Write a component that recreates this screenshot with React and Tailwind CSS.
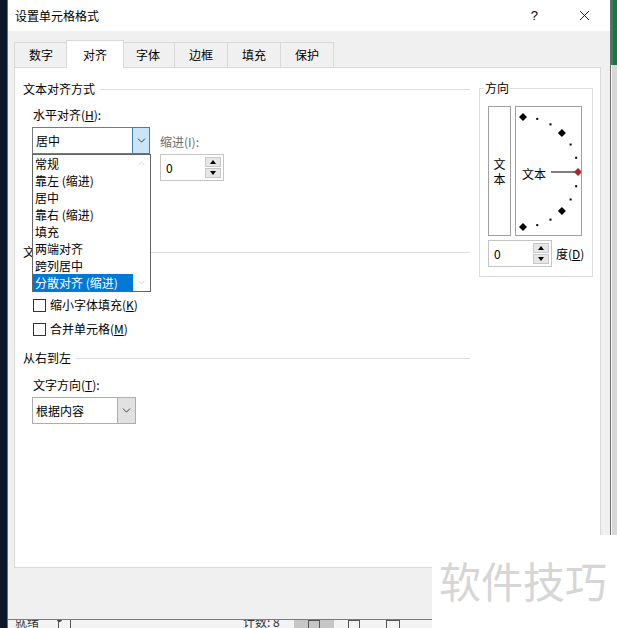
import { ChevronDown, ChevronUp, X } from "lucide-react";

const tabs = ["数字", "对齐", "字体", "边框", "填充", "保护"];
const listItems = ["常规", "靠左 (缩进)", "居中", "靠右 (缩进)", "填充", "两端对齐", "跨列居中", "分散对齐 (缩进)"];

function Heading({ children }) {
    return (
        <div className="h-[16px] flex items-center">
            <span className="leading-[16px]">{children}</span>
            <div className="flex-1 ml-[5px] border-t border-[#dcdcdc]" />
        </div>
    );
}

function Spin({ width }) {
    return (
        <div className={`h-[27px] ${width} border border-[#c4c4c4] bg-white flex items-center pl-[5px] pr-[2px]`}>
            <span className="flex-1 leading-[16px]">0</span>
            <div className="w-[16px] h-[21px] flex flex-col gap-px">
                <div className="flex-1 bg-[#e6e6e6] border border-[#c8c8c8] flex items-center justify-center">
                    <div className="w-0 h-0 border-x-[3px] border-x-transparent border-b-[4px] border-b-black" />
                </div>
                <div className="flex-1 bg-[#e6e6e6] border border-[#c8c8c8] flex items-center justify-center">
                    <div className="w-0 h-0 border-x-[3px] border-x-transparent border-t-[4px] border-t-black" />
                </div>
            </div>
        </div>
    );
}

function Checkbox({ label }) {
    return (
        <div className="h-[24px] flex items-center pl-[10px]">
            <div className="w-[13px] h-[13px] border border-[#333] bg-white" />
            <span className="ml-[4px] leading-[16px]">{label}</span>
        </div>
    );
}

function Dial() {
    const cx = 7, cy = 65, r = 55;
    const points = [];
    for (let a = 90; a >= -90; a -= 15) {
        const rad = (a * Math.PI) / 180;
        points.push({ a, x: cx + r * Math.cos(rad), y: cy - r * Math.sin(rad) });
    }
    return (
        <div className="relative w-[67px] h-[130px] border border-[#a0a0a0] bg-white ml-[4px]">
            <svg width="65" height="128" className="absolute left-0 top-0">
                <line x1="35" y1="65" x2="60" y2="65" stroke="#000" strokeWidth="1" />
                {points.map((p) => {
                    if (p.a === 0) {
                        return <polygon key={p.a} points={`${p.x},${p.y - 4} ${p.x + 4},${p.y} ${p.x},${p.y + 4} ${p.x - 4},${p.y}`} fill="#b22222" />;
                    }
                    if (Math.abs(p.a) % 45 === 0) {
                        return <polygon key={p.a} points={`${p.x},${p.y - 4} ${p.x + 4},${p.y} ${p.x},${p.y + 4} ${p.x - 4},${p.y}`} fill="#000" />;
                    }
                    return <rect key={p.a} x={p.x - 1} y={p.y - 1} width="2" height="2" fill="#000" />;
                })}
            </svg>
            <span className="absolute left-[6px] top-[59px] leading-[16px]">文本</span>
        </div>
    );
}

export default function App() {
    return (
        <div className="w-[617px] h-[628px] flex bg-[#0b1828] overflow-hidden relative text-[12px] text-black font-['Noto_Sans_CJK_SC','Noto_Sans',sans-serif]">
            <div className="w-[7px] bg-[#0b1828]" />

            {/* dialog */}
            <div className="w-[604px] flex flex-col border-x border-[#6c6c6c] bg-[#f0f0f0]">
                {/* title bar */}
                <div className="h-[31px] bg-white flex items-center pl-[7px] shrink-0">
                    <span className="leading-[16px]">设置单元格格式</span>
                    <span className="ml-auto mr-[38px] text-[13px] leading-[16px] font-['Liberation_Sans',sans-serif]">?</span>
                    <X size={17} strokeWidth={1.2} className="mr-[17px]" />
                </div>

                <div className="pl-[6px] pt-[9px] shrink-0">
                    {/* tabs */}
                    <div className="h-[27px] flex items-end">
                        {tabs.map((t, i) =>
                            i === 1 ? (
                                <div key={t} className="w-[58px] h-[28px] -mx-[2px] -mb-px bg-white border border-b-0 border-[#d9d9d9] relative z-10 flex items-center justify-center">
                                    <span className="leading-[16px] mt-[1px]">{t}</span>
                                </div>
                            ) : (
                                <div key={t} className={`w-[54px] h-[25px] border border-b-0 border-[#d9d9d9] flex items-center justify-center ${i > 0 ? "-ml-px" : ""}`}>
                                    <span className="leading-[16px]">{t}</span>
                                </div>
                            )
                        )}
                    </div>

                    {/* panel */}
                    <div className="w-[587px] h-[501px] bg-white border border-[#d9d9d9] relative flex">
                        <div className="w-[455px] pl-[8px] pt-[13px] flex flex-col">
                            <Heading>文本对齐方式</Heading>
                            <div className="pl-[10px] mt-[10px] leading-[16px]">
                                水平对齐(<span className="underline">H</span>):
                            </div>
                            <div className="pl-[9px] mt-[4px] flex items-start">
                                <div className="w-[118px] h-[27px] border border-[#7a7a7a] flex">
                                    <span className="flex-1 pl-[3px] leading-[25px]">居中</span>
                                    <div className="w-[18px] -my-px -mr-px bg-[#cce4f7] border border-[#3c7fb1] flex items-center justify-center">
                                        <ChevronDown size={13} strokeWidth={1.3} />
                                    </div>
                                </div>
                                <div className="ml-[10px] pt-[7px] flex flex-col">
                                    <span className="leading-[16px] text-[#6d6d6d]">缩进(I):</span>
                                    <div className="mt-[4px]">
                                        <Spin width="w-[64px]" />
                                    </div>
                                </div>
                            </div>
                            <div className="h-[63px]" />
                            <Heading>文本控制</Heading>
                            <div className="h-[33px]" />
                            <Checkbox label={<>缩小字体填充(<span className="underline">K</span>)</>} />
                            <Checkbox label={<>合并单元格(<span className="underline">M</span>)</>} />
                            <div className="h-[9px]" />
                            <Heading>从右到左</Heading>
                            <div className="pl-[10px] mt-[11px] leading-[16px]">
                                文字方向(<span className="underline">T</span>):
                            </div>
                            <div className="pl-[9px] mt-[4px]">
                                <div className="w-[104px] h-[27px] border border-[#adadad] flex">
                                    <span className="flex-1 pl-[3px] leading-[25px]">根据内容</span>
                                    <div className="w-[18px] bg-[#e1e1e1] border-l border-[#adadad] flex items-center justify-center">
                                        <ChevronDown size={13} strokeWidth={1.3} />
                                    </div>
                                </div>
                            </div>
                        </div>

                        {/* orientation */}
                        <div className="ml-[9px] mt-[20px]">
                            <div className="w-[114px] h-[189px] border border-[#dcdcdc] relative pl-[8px] pt-[17px]">
                                <span className="absolute left-[4px] -top-[9px] bg-white px-[1px] leading-[16px]">方向</span>
                                <div className="flex">
                                    <div className="w-[23px] h-[130px] border border-[#a0a0a0] flex flex-col items-center justify-center leading-[15px]">
                                        <span>文</span>
                                        <span>本</span>
                                    </div>
                                    <Dial />
                                </div>
                                <div className="mt-[4px] flex items-center">
                                    <Spin width="w-[64px]" />
                                    <span className="ml-[4px] leading-[16px]">度(<span className="underline">D</span>)</span>
                                </div>
                            </div>
                        </div>

                        {/* open dropdown list */}
                        <div className="absolute left-[17px] top-[86px] w-[119px] h-[138px] border border-[#646464] bg-white flex z-20">
                            <div className="w-[100px] flex flex-col">
                                {listItems.map((item, i) => (
                                    <div key={item} className={`h-[17px] pl-[2px] leading-[17px] whitespace-nowrap ${i === 7 ? "bg-[#0078d7] text-white" : ""}`}>
                                        {item}
                                    </div>
                                ))}
                            </div>
                            <div className="flex-1 flex flex-col items-center justify-between py-[3px] text-[#c2c2c2]">
                                <ChevronUp size={11} strokeWidth={1.5} />
                                <ChevronDown size={11} strokeWidth={1.5} />
                            </div>
                        </div>
                    </div>
                </div>

                <div className="flex-1" />

                {/* excel status bar behind the dialog */}
                <div className="h-[9px] shrink-0 border-t border-[#7b7b7b] bg-[#f3f3f3] flex items-start overflow-hidden">
                    <span className="ml-[7px] mt-[-6px] leading-[16px] text-[#333]">就绪</span>
                    <div className="ml-[19px] mt-[-1px] w-[13px] h-[10px] border border-[#555] relative">
                        <div className="absolute -left-[2px] -top-[3px] w-[5px] h-[5px] rounded-full bg-[#444]" />
                    </div>
                    <span className="ml-[172px] mt-[-6px] leading-[16px] text-[#333]">计数: 8</span>
                    <div className="ml-[14px] w-[40px] h-[9px] bg-[#c6c6c6] flex justify-center">
                        <div className="w-[12px] h-[8px] border border-[#555] border-b-0" />
                    </div>
                    <div className="ml-[14px] w-[12px] h-[9px] border border-[#555] border-b-0" />
                    <div className="ml-[26px] w-[14px] h-[9px] border border-[#555] border-b-0" />
                </div>
            </div>

            {/* excel window edge */}
            <div className="w-[6px] flex flex-col">
                <div className="h-[65px] bg-[#217346] border-l-2 border-[#2a8a55]" />
                <div className="flex-1 bg-[#d8d8d8] border-l border-[#fafafa]" />
            </div>

            {/* watermark */}
            <div className="absolute right-0 bottom-0 w-[185px] h-[93px] bg-white pl-[7px] pt-[24px]">
                <span className="text-[42px] leading-[42px] text-[#d6d6d6] whitespace-nowrap">软件技巧</span>
            </div>
        </div>
    );
}
